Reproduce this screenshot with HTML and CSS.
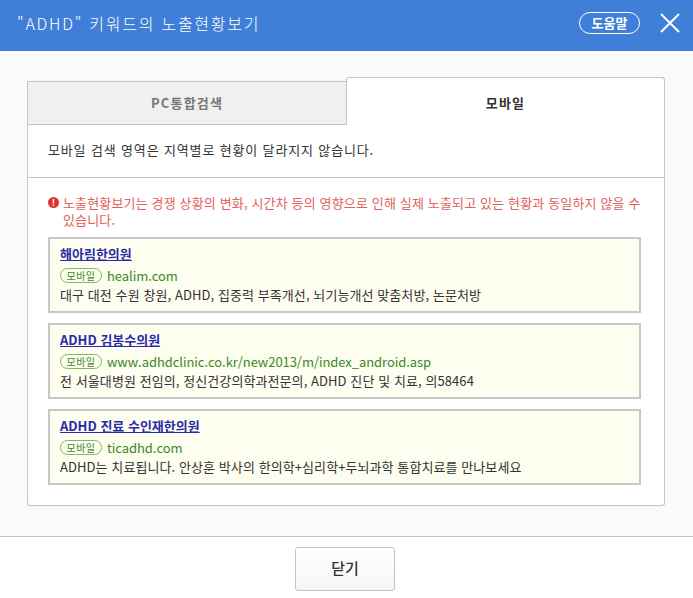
FILE: index.html
```html
<!DOCTYPE html>
<html lang="ko">
<head>
    <meta charset="UTF-8">
    <title>노출현황보기</title>
    <link rel="stylesheet" href="styles.css">
</head>
<body>
    <div class="header">
        <div class="title">"ADHD" 키워드의 노출현황보기</div>
        <div class="help">도움말</div>
        <svg class="close" width="20" height="20" viewBox="0 0 20 20"><path d="M1 1L19 19M19 1L1 19" stroke="#fff" stroke-width="2" fill="none"/></svg>
    </div>
    <div class="main">
        <div class="tabs">
            <div class="tab">PC통합검색</div>
            <div class="tab active">모바일</div>
        </div>
        <div class="panel">
            <div class="note">모바일 검색 영역은 지역별로 현황이 달라지지 않습니다.</div>
            <div class="result">
                <div class="warn">
                    <span class="warn-icon">!</span>
                    <span>노출현황보기는 경쟁 상황의 변화, 시간차 등의 영향으로 인해 실제 노출되고 있는 현황과 동일하지 않을 수 있습니다.</span>
                </div>
                <div class="ad">
                    <a class="ad-title">해아림한의원</a>
                    <div class="ad-url"><span class="badge">모바일</span>healim.com</div>
                    <div class="ad-desc">대구 대전 수원 창원, ADHD, 집중력 부족개선, 뇌기능개선 맞춤처방, 논문처방</div>
                </div>
                <div class="ad">
                    <a class="ad-title">ADHD 김봉수의원</a>
                    <div class="ad-url"><span class="badge">모바일</span>www.adhdclinic.co.kr/new2013/m/index_android.asp</div>
                    <div class="ad-desc">전 서울대병원 전임의, 정신건강의학과전문의, ADHD 진단 및 치료, 의58464</div>
                </div>
                <div class="ad">
                    <a class="ad-title">ADHD 진료 수인재한의원</a>
                    <div class="ad-url"><span class="badge">모바일</span>ticadhd.com</div>
                    <div class="ad-desc">ADHD는 치료됩니다. 안상훈 박사의 한의학+심리학+두뇌과학 통합치료를 만나보세요</div>
                </div>
            </div>
        </div>
    </div>
    <div class="footer">
        <div class="btn">닫기</div>
    </div>
</body>
</html>
```

FILE: styles.css
```css
* {
    box-sizing: border-box;
}
body {
    margin: 0;
    background: #fff;
    font-family: "Noto Sans CJK KR", "Liberation Sans", sans-serif;
    font-size: 12px;
    color: #222;
}
.header {
    height: 51px;
    background: #3f7fd7;
    display: flex;
    align-items: center;
    padding: 0 13px 5px 17px;
    color: #fff;
}
.title {
    flex: 1;
    font-size: 16px;
    font-weight: 300;
    letter-spacing: 1.75px;
    margin-top: -1px;
}
.help {
    width: 61px;
    height: 22px;
    border: 1px solid #fff;
    border-radius: 11px;
    font-size: 13px;
    font-weight: 700;
    line-height: 19px;
    text-align: center;
    margin-right: 20px;
}
.main {
    height: 486px;
    background: #fafafa;
    border-bottom: 1px solid #c4c4c4;
    padding: 26px 28px 0 27px;
}
.tabs {
    display: flex;
    height: 48px;
}
.tab {
    width: 320px;
    margin-top: 4px;
    background: #f0f0f0;
    border: 1px solid #c4c4c4;
    text-align: center;
    font-size: 13px;
    letter-spacing: 1.2px;
    line-height: 42px;
    font-weight: 700;
    color: #777;
}
.tab.active {
    width: 319px;
    margin-top: 0;
    margin-left: -1px;
    background: #fff;
    border-bottom: 0;
    border-radius: 3px 3px 0 0;
    line-height: 50px;
    color: #333;
}
.panel {
    height: 381px;
    background: #fff;
    border: 1px solid #c4c4c4;
    border-top: 0;
    border-radius: 0 0 3px 3px;
}
.note {
    height: 53px;
    padding: 15px 20px 0;
    border-bottom: 1px solid #c4c4c4;
    font-size: 13px;
    line-height: 19px;
    letter-spacing: 0.85px;
    color: #333;
}
.result {
    padding: 16px 23px 0 20px;
}
.warn {
    display: flex;
    gap: 4px;
    color: #e2615c;
    font-size: 13px;
    line-height: 17px;
    letter-spacing: 0.15px;
    word-break: keep-all;
    margin-bottom: 9px;
}
.warn-icon {
    flex: none;
    width: 11px;
    height: 11px;
    margin-top: 3px;
    border-radius: 50%;
    background: #d9362f;
    color: #fff;
    font-size: 9px;
    font-weight: 700;
    line-height: 11px;
    text-align: center;
}
.ad {
    height: 76px;
    margin-bottom: 10px;
    padding: 5px 10px 0;
    background: #fdfdf0;
    border: 2px solid #c8c8c8;
}
.ad-title {
    display: block;
    height: 21px;
    font-size: 13px;
    font-weight: 700;
    color: #2a2aa8;
    text-decoration: underline;
}
.ad-url {
    display: flex;
    align-items: center;
    height: 21px;
    font-size: 13px;
    letter-spacing: -0.06px;
    color: #3a8a22;
}
.badge {
    width: 42px;
    height: 15px;
    margin-right: 5px;
    border: 1px solid #7fb56a;
    border-radius: 8px;
    font-size: 10px;
    letter-spacing: 0.5px;
    line-height: 13px;
    text-align: center;
}
.ad-desc {
    font-size: 13px;
    line-height: 18px;
    letter-spacing: 0.08px;
    white-space: nowrap;
    color: #333;
}
.footer {
    display: flex;
    justify-content: center;
    padding: 10px 3px 0 0;
}
.btn {
    width: 100px;
    height: 44px;
    border: 1px solid #c4c4c4;
    border-radius: 3px;
    background: linear-gradient(#fff, #f5f5f5);
    font-size: 15px;
    font-weight: 500;
    line-height: 40px;
    text-align: center;
    color: #333;
}
```
